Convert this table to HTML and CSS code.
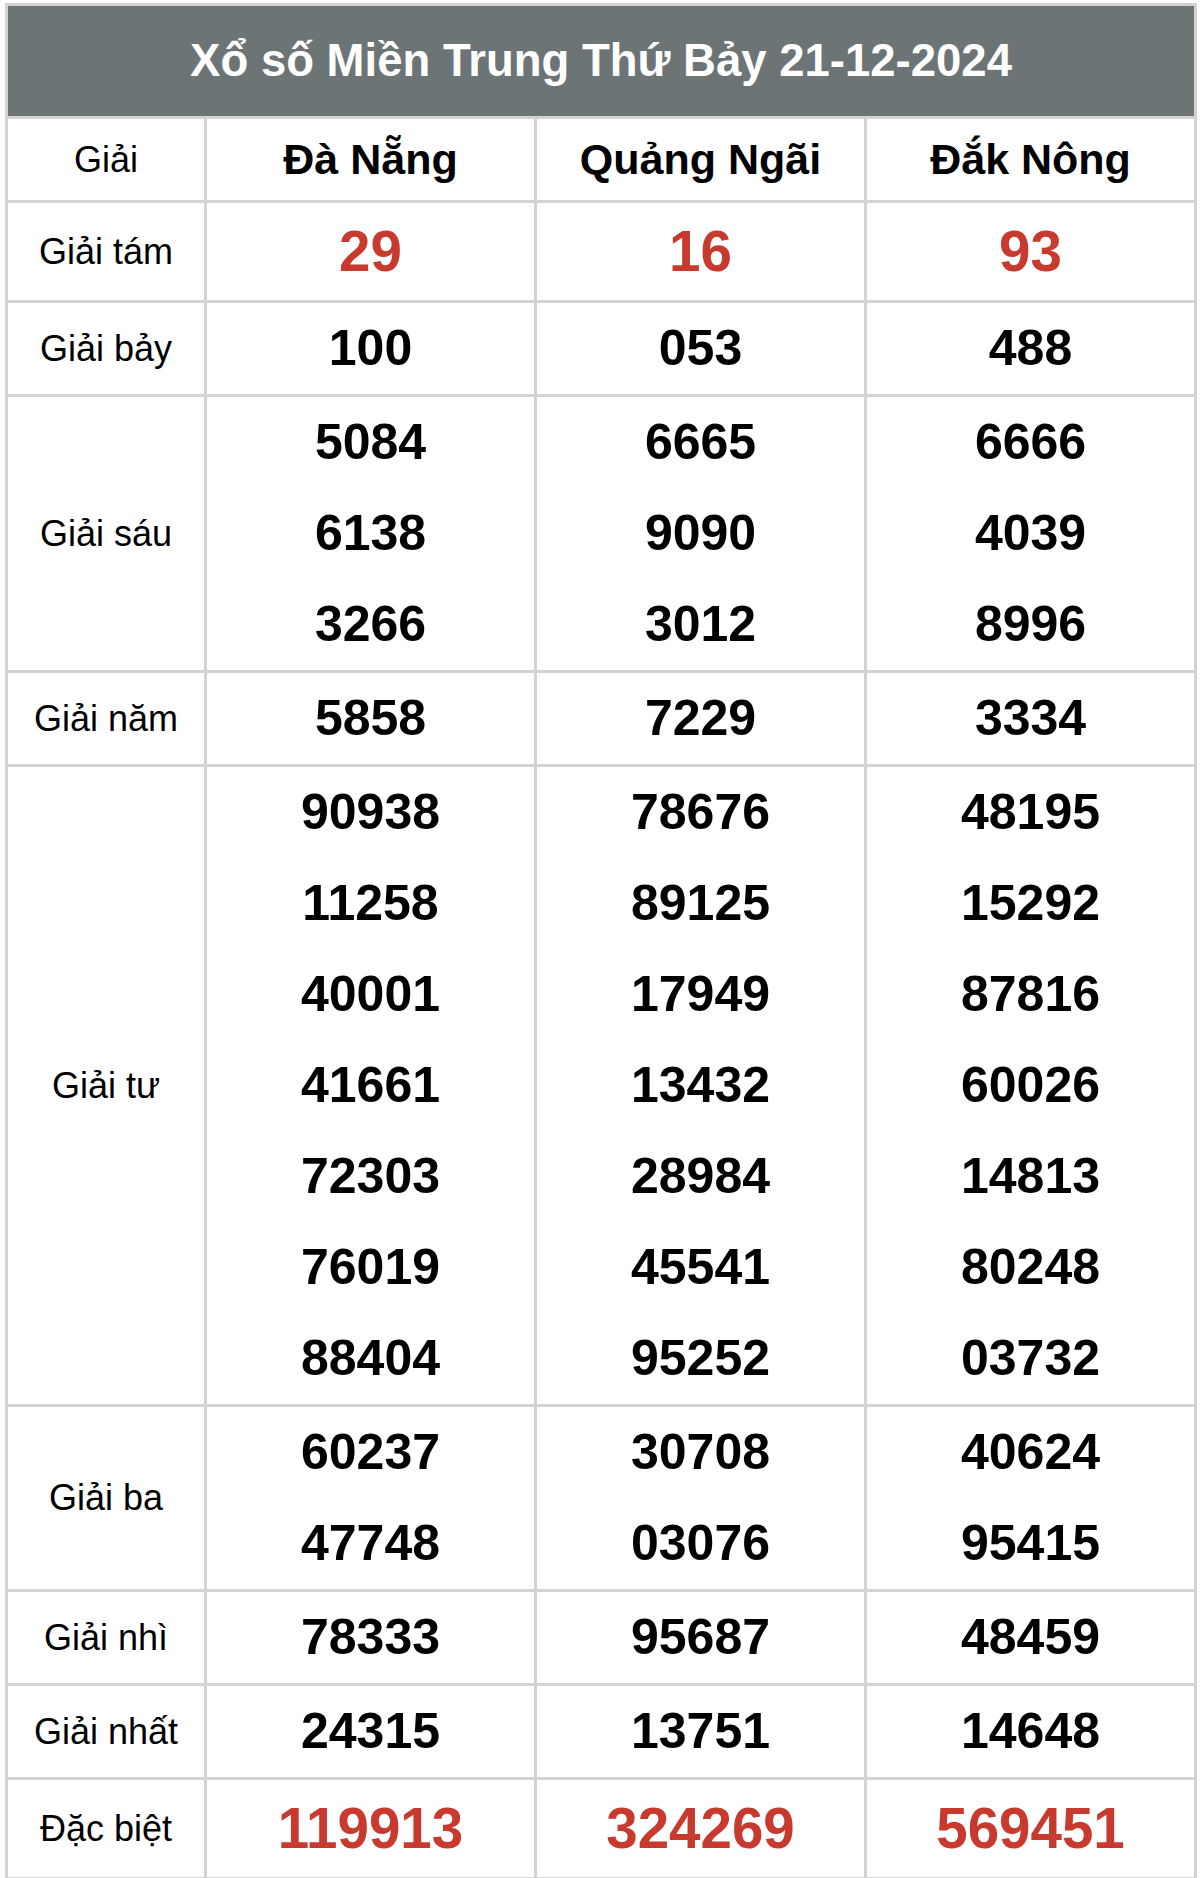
FILE: index.html
```html
<!DOCTYPE html>
<html lang="vi">
<head>
<meta charset="utf-8">
<title>Xổ số Miền Trung Thứ Bảy 21-12-2024</title>
<link rel="stylesheet" href="styles.css">
</head>
<body>
<table class="kq">
  <colgroup>
    <col class="c-label">
    <col class="c-prov">
    <col class="c-prov">
    <col class="c-prov">
  </colgroup>
  <thead>
    <tr><th colspan="4" class="title">Xổ số Miền Trung Thứ Bảy 21-12-2024</th></tr>
    <tr class="prov-row">
      <td class="label">Giải</td>
      <th class="prov">Đà Nẵng</th>
      <th class="prov">Quảng Ngãi</th>
      <th class="prov">Đắk Nông</th>
    </tr>
  </thead>
  <tbody>
    <tr class="big">
      <td class="label">Giải tám</td>
      <td class="num red"><div>29</div></td>
      <td class="num red"><div>16</div></td>
      <td class="num red"><div>93</div></td>
    </tr>
    <tr>
      <td class="label">Giải bảy</td>
      <td class="num"><div>100</div></td>
      <td class="num"><div>053</div></td>
      <td class="num"><div>488</div></td>
    </tr>
    <tr>
      <td class="label">Giải sáu</td>
      <td class="num"><div>5084</div><div>6138</div><div>3266</div></td>
      <td class="num"><div>6665</div><div>9090</div><div>3012</div></td>
      <td class="num"><div>6666</div><div>4039</div><div>8996</div></td>
    </tr>
    <tr>
      <td class="label">Giải năm</td>
      <td class="num"><div>5858</div></td>
      <td class="num"><div>7229</div></td>
      <td class="num"><div>3334</div></td>
    </tr>
    <tr>
      <td class="label">Giải tư</td>
      <td class="num"><div>90938</div><div>11258</div><div>40001</div><div>41661</div><div>72303</div><div>76019</div><div>88404</div></td>
      <td class="num"><div>78676</div><div>89125</div><div>17949</div><div>13432</div><div>28984</div><div>45541</div><div>95252</div></td>
      <td class="num"><div>48195</div><div>15292</div><div>87816</div><div>60026</div><div>14813</div><div>80248</div><div>03732</div></td>
    </tr>
    <tr>
      <td class="label">Giải ba</td>
      <td class="num"><div>60237</div><div>47748</div></td>
      <td class="num"><div>30708</div><div>03076</div></td>
      <td class="num"><div>40624</div><div>95415</div></td>
    </tr>
    <tr>
      <td class="label">Giải nhì</td>
      <td class="num"><div>78333</div></td>
      <td class="num"><div>95687</div></td>
      <td class="num"><div>48459</div></td>
    </tr>
    <tr>
      <td class="label">Giải nhất</td>
      <td class="num"><div>24315</div></td>
      <td class="num"><div>13751</div></td>
      <td class="num"><div>14648</div></td>
    </tr>
    <tr class="big">
      <td class="label">Đặc biệt</td>
      <td class="num red"><div>119913</div></td>
      <td class="num red"><div>324269</div></td>
      <td class="num red"><div>569451</div></td>
    </tr>
  </tbody>
</table>
</body>
</html>
```

FILE: styles.css
```css
html, body {
  margin: 0;
  padding: 0;
  background: #ffffff;
}

body {
  font-family: "Liberation Sans", Arial, Helvetica, sans-serif;
  color: #000;
  padding: 3px 0 0 5px;
}

.kq {
  width: 1190px;
  border-collapse: collapse;
  table-layout: fixed;
  border: 3px solid #d3d3d3;
}

.c-label { width: 199px; }
.c-prov { width: 330px; }

.kq td,
.kq th {
  border: 3px solid #d3d3d3;
  padding: 0;
  text-align: center;
  vertical-align: middle;
}

.kq th.title {
  background: #6c7476;
  color: #ffffff;
  font-size: 45.5px;
  font-weight: bold;
  height: 110px;
  line-height: 110px;
}

.prov-row td,
.prov-row th {
  height: 81px;
}

.prov {
  font-size: 43px;
  font-weight: bold;
  color: #000;
}

.label {
  font-size: 36px;
  font-weight: normal;
  color: #000;
}

.num {
  font-size: 50px;
  font-weight: bold;
}

.num div {
  line-height: 91px;
}

.big .num div {
  line-height: 97px;
}

.red {
  color: #c8392e;
  font-size: 56.5px;
}
```
